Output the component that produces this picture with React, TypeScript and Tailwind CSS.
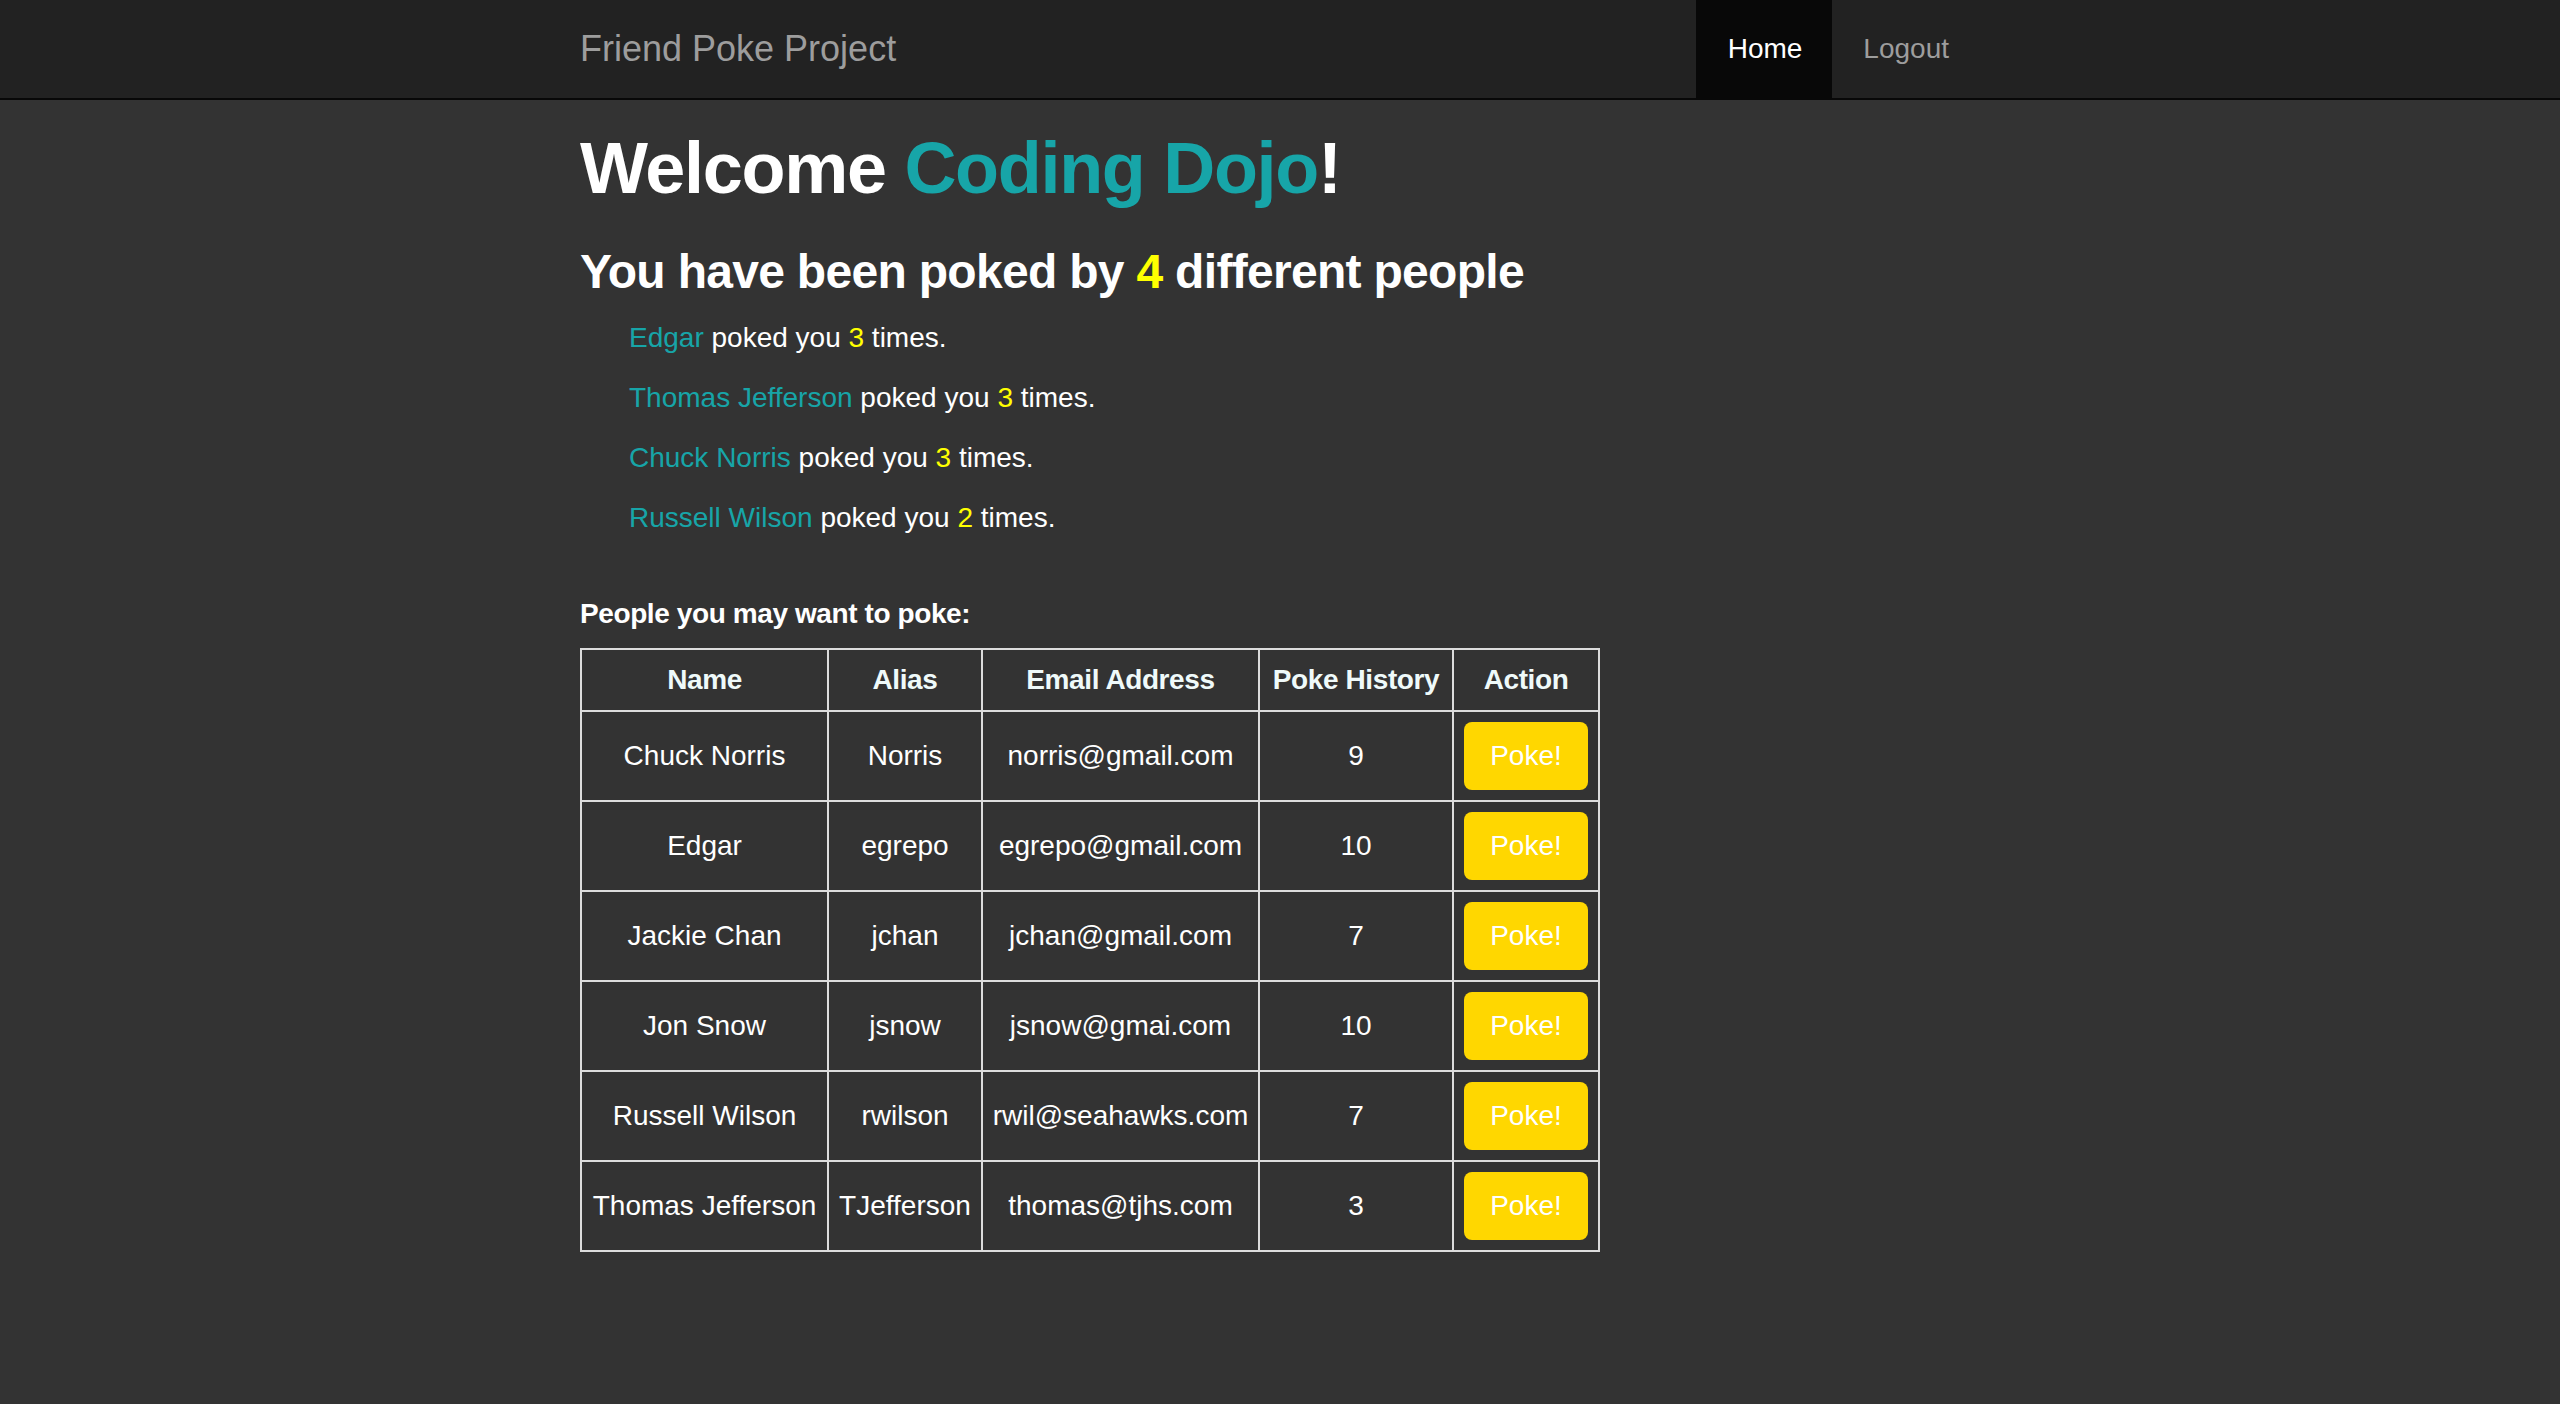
const POKED_BY = [
  { name: 'Edgar', count: 3 },
  { name: 'Thomas Jefferson', count: 3 },
  { name: 'Chuck Norris', count: 3 },
  { name: 'Russell Wilson', count: 2 },
];

const USERS = [
  { name: 'Chuck Norris', alias: 'Norris', email: 'norris@gmail.com', history: 9 },
  { name: 'Edgar', alias: 'egrepo', email: 'egrepo@gmail.com', history: 10 },
  { name: 'Jackie Chan', alias: 'jchan', email: 'jchan@gmail.com', history: 7 },
  { name: 'Jon Snow', alias: 'jsnow', email: 'jsnow@gmai.com', history: 10 },
  { name: 'Russell Wilson', alias: 'rwilson', email: 'rwil@seahawks.com', history: 7 },
  { name: 'Thomas Jefferson', alias: 'TJefferson', email: 'thomas@tjhs.com', history: 3 },
];

const Navbar = () => {
  return (
    <nav className="h-[100px] bg-[#222222] border-b-2 border-[#080808]">
      <div className="w-[1400px] mx-auto h-full flex items-center justify-between">
        <a href="#" className="text-[36px] leading-[40px] text-[#9d9d9d]">
          Friend Poke Project
        </a>
        <ul className="flex h-full">
          <li className="h-full">
            <a href="#" className="h-full flex items-center pl-[32px] pr-[30px] bg-[#080808] text-white text-[28px]">
              Home
            </a>
          </li>
          <li className="h-full">
            <a href="#" className="h-full flex items-center px-[31px] text-[#9d9d9d] text-[28px]">
              Logout
            </a>
          </li>
        </ul>
      </div>
    </nav>
  );
};

export default function App() {
  return (
    <div className="min-h-screen bg-[#333333] text-white font-['Liberation_Sans',Arial,sans-serif]">
      <Navbar />

      <main className="w-[1400px] mx-auto">
        {/* Welcome */}
        <h1 className="mt-[29px] text-[72px] leading-[79px] font-bold tracking-[-1.3px]">
          Welcome <span className="text-[#17a5a8]">Coding Dojo</span>!
        </h1>
        <h3 className="mt-[37px] text-[48px] leading-[53px] font-bold tracking-[-0.7px]">
          You have been poked by <span className="text-[#ffff00]">4</span> different people
        </h3>

        {/* Who poked you */}
        <div className="mt-[20px] ml-[49px]">
          {POKED_BY.map((p) => (
            <p key={p.name} className="text-[28px] leading-[40px] mb-[20px]">
              <span className="text-[#17a5a8]">{p.name}</span> poked you{' '}
              <span className="text-[#ffff00]">{p.count}</span> times.
            </p>
          ))}
        </div>

        {/* People to poke */}
        <p className="mt-[56px] text-[28px] leading-[40px] font-bold tracking-[-0.4px]">
          People you may want to poke:
        </p>
        <table className="mt-[14px] w-[1020px] table-fixed border-collapse border-2 border-[#dddddd] text-[28px] leading-[40px]">
          <colgroup>
            <col className="w-[247px]" />
            <col className="w-[154px]" />
            <col className="w-[277px]" />
            <col className="w-[194px]" />
            <col className="w-[146px]" />
          </colgroup>
          <thead>
            <tr>
              <th className="border-2 border-[#dddddd] py-[10px] px-[8px] text-center font-bold text-[#effafa] tracking-[-0.4px] whitespace-nowrap">Name</th>
              <th className="border-2 border-[#dddddd] py-[10px] px-[8px] text-center font-bold text-[#effafa] tracking-[-0.4px] whitespace-nowrap">Alias</th>
              <th className="border-2 border-[#dddddd] py-[10px] px-[8px] text-center font-bold text-[#effafa] tracking-[-0.4px] whitespace-nowrap">Email Address</th>
              <th className="border-2 border-[#dddddd] py-[10px] px-[8px] text-center font-bold text-[#effafa] tracking-[-0.4px] whitespace-nowrap">Poke History</th>
              <th className="border-2 border-[#dddddd] py-[10px] px-[8px] text-center font-bold text-[#effafa] tracking-[-0.4px] whitespace-nowrap">Action</th>
            </tr>
          </thead>
          <tbody>
            {USERS.map((u) => (
              <tr key={u.email}>
                <td className="border-2 border-[#dddddd] py-[10px] px-[4px] text-center align-middle whitespace-nowrap">{u.name}</td>
                <td className="border-2 border-[#dddddd] py-[10px] px-[4px] text-center align-middle whitespace-nowrap">{u.alias}</td>
                <td className="border-2 border-[#dddddd] py-[10px] px-[4px] text-center align-middle whitespace-nowrap">{u.email}</td>
                <td className="border-2 border-[#dddddd] py-[10px] px-[4px] text-center align-middle">{u.history}</td>
                <td className="border-2 border-[#dddddd] py-[10px] px-[4px] text-center align-middle">
                  <button className="w-[124px] h-[68px] rounded-[8px] bg-[#ffd700] text-white text-[28px] leading-[40px]">
                    Poke!
                  </button>
                </td>
              </tr>
            ))}
          </tbody>
        </table>
      </main>
    </div>
  );
}
